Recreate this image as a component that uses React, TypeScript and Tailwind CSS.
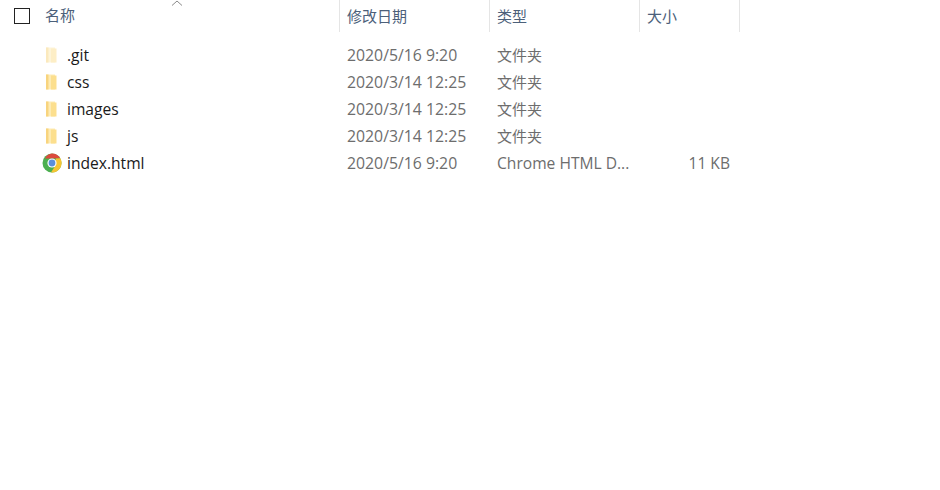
import React from "react";

const rows = [
  { name: ".git", date: "2020/5/16 9:20", type: "文件夹", size: "", faded: true },
  { name: "css", date: "2020/3/14 12:25", type: "文件夹", size: "" },
  { name: "images", date: "2020/3/14 12:25", type: "文件夹", size: "" },
  { name: "js", date: "2020/3/14 12:25", type: "文件夹", size: "" },
  { name: "index.html", date: "2020/5/16 9:20", type: "Chrome HTML D...", size: "11 KB", chrome: true },
];

const Folder = ({ faded }: { faded?: boolean }) => (
  <svg width="16" height="16" viewBox="0 0 16 16" className={faded ? "opacity-50" : ""}>
    <path d="M2 0.5h9v15H2z" fill="#fdebb4" />
    <path d="M7 1.500h5.500v14H7z" fill="#fcdf8e" />
    <path d="M2 .5h2.500v15H2z" fill="#f8d47e" />
  </svg>
);

const Chrome = () => (
  <svg width="20" height="20" viewBox="0 0 20 20">
    <circle cx="10" cy="10" r="9.5" fill="#4caf50" />
    <path d="M10 .5a9.5 9.5 0 0 1 8.300 4.800L10 5.500H2.900A9.500 9.500 0 0 1 10 .5z" fill="#dc4a3d" />
    <path d="M18.300 5.300A9.500 9.500 0 0 1 9 19.400l4.300-6.600.5-7.300z" fill="#f5c533" />
    <circle cx="10" cy="10" r="4.600" fill="#fff" />
    <circle cx="10" cy="10" r="3.400" fill="#5a8fdc" />
  </svg>
);

const App: React.FC = () => {
  return (
    <div className="w-[940px] h-[490px] bg-white overflow-hidden relative font-['Noto_Sans_CJK_SC',sans-serif] text-[15px]">
      {/* sort arrow */}
      <svg width="12" height="6" viewBox="0 0 12 6" className="absolute left-[171px] top-0">
        <path d="M1 5.500L6 1l5 4.500" fill="none" stroke="#8a8a8a" strokeWidth="1" />
      </svg>

      {/* header */}
      <div className="flex h-[32px] text-[#4c607a] text-[15px] leading-[31px]">
        <div className="w-[339px] flex items-center">
          <div className="w-[16px] h-[16px] ml-[14px] border border-[#222] shrink-0" />
          <span className="ml-[15px] leading-[30px] mb-[2px]">名称</span>
        </div>
        <div className="w-[150px] pl-[7px] border-l border-[#e5e5e5]">修改日期</div>
        <div className="w-[150px] pl-[7px] border-l border-[#e5e5e5]">类型</div>
        <div className="w-[101px] pl-[7px] border-x border-[#e5e5e5]">大小</div>
      </div>

      {/* rows */}
      <div className="mt-[10px] flex flex-col">
        {rows.map((row) => (
          <div key={row.name} className="flex h-[27px] items-center text-[#6d6d6d]">
            <div className="w-[341px] flex items-center">
              <div className="w-[20px] ml-[42px] flex justify-center shrink-0">
                {row.chrome ? <Chrome /> : <Folder faded={row.faded} />}
              </div>
              <span className="ml-[5px] text-[#1a1a1a] text-[15.6px] font-['Open_Sans',sans-serif]">{row.name}</span>
            </div>
            <div className="w-[150px] pl-[6px] text-[15.8px] font-['Open_Sans',sans-serif]">{row.date}</div>
            <div className={row.chrome
              ? "w-[150px] pl-[6px] text-[15.6px] font-['Open_Sans',sans-serif] whitespace-nowrap"
              : "w-[150px] pl-[6px] text-[15px] whitespace-nowrap"}>{row.type}</div>
            <div className="w-[89px] text-right text-[15.6px] font-['Open_Sans',sans-serif]">{row.size}</div>
          </div>
        ))}
      </div>
    </div>
  );
};

export default App;
